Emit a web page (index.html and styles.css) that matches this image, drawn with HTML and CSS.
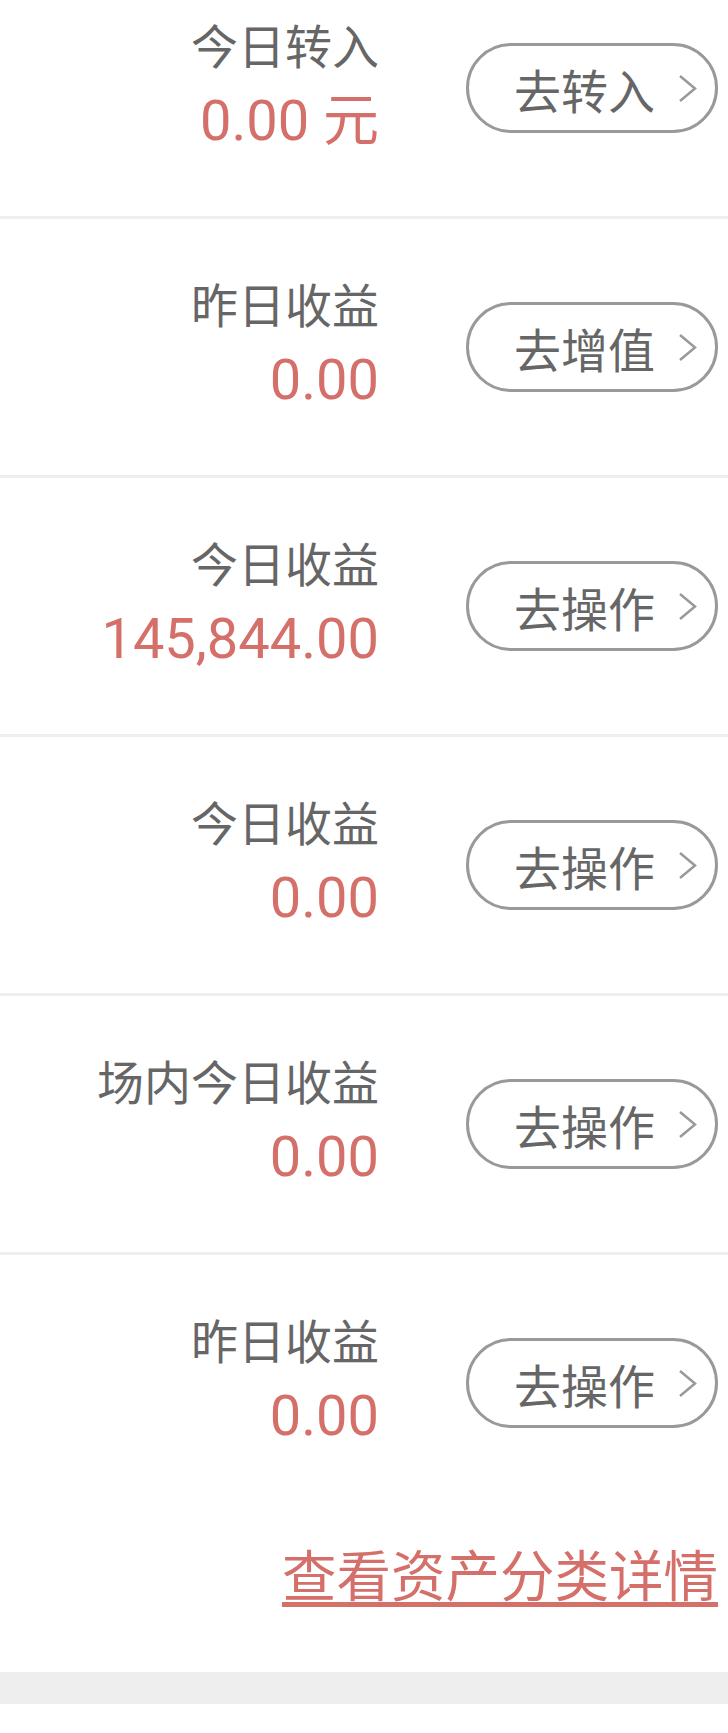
FILE: index.html
```html
<!DOCTYPE html>
<html lang="zh-CN">
<head>
    <meta charset="UTF-8">
    <meta name="viewport" content="width=device-width, initial-scale=1.0">
    <title>资产</title>
    <link rel="stylesheet" href="styles.css">
</head>
<body>
    <div class="list">
        <div class="row">
            <div class="info">
                <div class="label">今日转入</div>
                <div class="value">0.00 元</div>
            </div>
            <a class="btn" href="#">去转入
                <svg class="arrow" viewBox="0 0 19 29"><polyline points="2,2 17,14.5 2,27"/></svg>
            </a>
        </div>
        <div class="row">
            <div class="info">
                <div class="label">昨日收益</div>
                <div class="value">0.00</div>
            </div>
            <a class="btn" href="#">去增值
                <svg class="arrow" viewBox="0 0 19 29"><polyline points="2,2 17,14.5 2,27"/></svg>
            </a>
        </div>
        <div class="row">
            <div class="info">
                <div class="label">今日收益</div>
                <div class="value">145,844.00</div>
            </div>
            <a class="btn" href="#">去操作
                <svg class="arrow" viewBox="0 0 19 29"><polyline points="2,2 17,14.5 2,27"/></svg>
            </a>
        </div>
        <div class="row">
            <div class="info">
                <div class="label">今日收益</div>
                <div class="value">0.00</div>
            </div>
            <a class="btn" href="#">去操作
                <svg class="arrow" viewBox="0 0 19 29"><polyline points="2,2 17,14.5 2,27"/></svg>
            </a>
        </div>
        <div class="row">
            <div class="info">
                <div class="label">场内今日收益</div>
                <div class="value">0.00</div>
            </div>
            <a class="btn" href="#">去操作
                <svg class="arrow" viewBox="0 0 19 29"><polyline points="2,2 17,14.5 2,27"/></svg>
            </a>
        </div>
        <div class="row">
            <div class="info">
                <div class="label">昨日收益</div>
                <div class="value">0.00</div>
            </div>
            <a class="btn" href="#">去操作
                <svg class="arrow" viewBox="0 0 19 29"><polyline points="2,2 17,14.5 2,27"/></svg>
            </a>
        </div>
    </div>

    <div class="more">
        <a class="more-link" href="#">查看资产分类详情</a>
    </div>
    <div class="gap"></div>
</body>
</html>
```

FILE: styles.css
```css
body {
    margin: 0;
    background-color: #fff;
    font-family: "Noto Sans CJK SC", sans-serif;
}

/* page is scrolled a little, first row is cut off */
.list {
    margin-top: -40px;
}

.row {
    display: flex;
    align-items: center;
    height: 256px;
    padding-right: 10px;
    border-bottom: 3px solid #eee;
}
.row:last-child {
    border-bottom: none;
}

.info {
    flex: 1;
    text-align: right;
    margin-top: -8px;
}

.label {
    font-size: 47px;
    line-height: 56px;
    color: #666;
}

.value {
    margin-top: 17px;
    font-family: Roboto, "Noto Sans CJK SC", sans-serif;
    font-size: 56px;
    line-height: 64px;
    color: #d46f69;
}

.btn {
    display: flex;
    align-items: center;
    box-sizing: border-box;
    width: 252px;
    height: 90px;
    margin-left: 87px;
    padding-left: 45px;
    border: 3px solid #999;
    border-radius: 45px;
    font-size: 47px;
    color: #666;
    text-decoration: none;
}

.arrow {
    width: 19px;
    height: 29px;
    margin-left: 23px;
    fill: none;
    stroke: #999;
    stroke-width: 2.5;
}

.more {
    height: 161px;
    padding-right: 10px;
    text-align: right;
    box-sizing: border-box;
    padding-top: 30px;
}

.more-link {
    font-size: 54.5px;
    line-height: 64px;
    color: #d46f69;
    text-decoration: underline;
    text-decoration-thickness: 5px;
    text-underline-offset: 6px;
}

.gap {
    height: 32px;
    background-color: #eee;
}
```
